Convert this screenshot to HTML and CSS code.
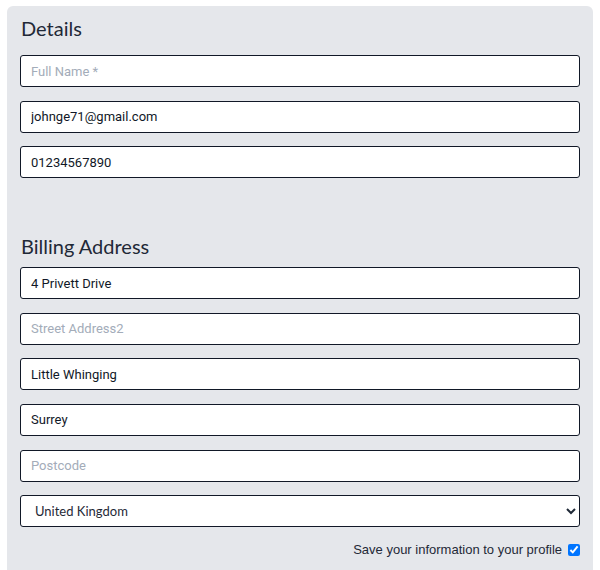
FILE: index.html
```html
<!DOCTYPE html>
<html>
<head>
<meta charset="utf-8">
<link rel="stylesheet" href="styles.css">
</head>
<body>
<div class="panel">
  <h2 class="heading">Details</h2>
  <div class="fields">
    <input class="field" type="text" placeholder="Full Name *">
    <input class="field" type="email" value="johnge71@gmail.com">
    <input class="field" type="tel" value="01234567890">
  </div>
  <h2 class="heading heading-gap">Billing Address</h2>
  <div class="fields">
    <input class="field" type="text" value="4 Privett Drive">
    <input class="field" type="text" placeholder="Street Address2">
    <input class="field" type="text" value="Little Whinging">
    <input class="field" type="text" value="Surrey">
    <input class="field" type="text" placeholder="Postcode">
    <select class="field select">
      <option>United Kingdom</option>
    </select>
  </div>
  <label class="save">Save your information to your profile <input class="save-box" type="checkbox" checked></label>
</div>
</body>
</html>
```
FILE: styles.css
```css
html, body {
  margin: 0;
  padding: 0;
  background: #ffffff;
}
body {
  padding: 6px 7px 0 7px;
}
.panel {
  width: 586px;
  box-sizing: border-box;
  background: #e5e7eb;
  border-radius: 6px;
  padding: 10px 13px 30px 13px;
}
.heading {
  margin: 0 0 15px 1px;
  font-family: Lato, "Open Sans", sans-serif;
  font-weight: 400;
  font-size: 20px;
  line-height: 24px;
  color: #1f2937;
}
.heading-gap {
  margin-top: 56px;
  margin-bottom: 9px;
}
.fields {
  display: flex;
  flex-direction: column;
  gap: 13.6px;
}
.field {
  box-sizing: border-box;
  width: 560px;
  height: 32px;
  margin: 0;
  border: 1px solid #111827;
  border-radius: 3px;
  background: #ffffff;
  padding: 0 10px;
  font-family: Roboto, sans-serif;
  font-size: 13px;
  color: #111827;
  outline: none;
}
.field::placeholder {
  color: #a3acb9;
}
.select {
  padding-left: 10px;
  font-family: Lato, sans-serif;
  font-size: 13px;
  color: #1f2937;
}
.save {
  display: flex;
  justify-content: flex-end;
  align-items: center;
  gap: 6px;
  margin-top: 15px;
  font-family: "Liberation Sans", Arial, sans-serif;
  font-size: 13px;
  color: #1f2937;
}
.save-box {
  margin: 0;
  width: 12px;
  height: 12px;
}
```
